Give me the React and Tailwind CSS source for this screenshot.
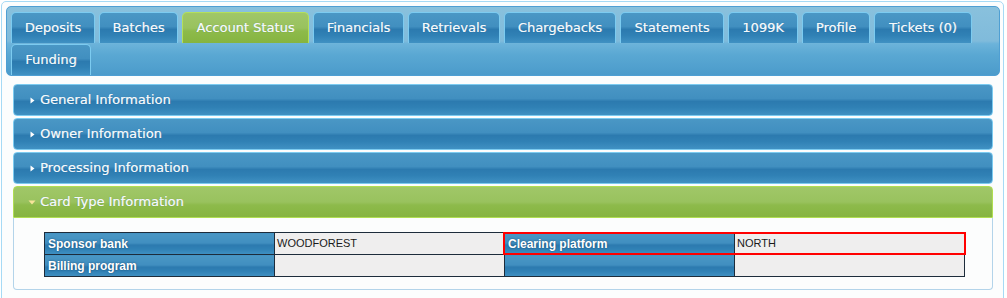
import React from "react";

const blueGloss =
  "bg-[linear-gradient(to_bottom,#4a97c5_0%,#418fc0_45%,#2c7aaf_55%,#3081b5_75%,#4091c3_100%)]";
const greenGloss =
  "bg-[linear-gradient(to_bottom,#a0c768_0%,#99c25e_50%,#8dba4b_60%,#86b440_100%)]";

const tabs = [
  { label: "Deposits", w: "w-[84px]" },
  { label: "Batches", w: "w-[79px]" },
  { label: "Account Status", w: "w-[127px]", active: true },
  { label: "Financials", w: "w-[91px]" },
  { label: "Retrievals", w: "w-[92px]" },
  { label: "Chargebacks", w: "w-[112px]" },
  { label: "Statements", w: "w-[104px]" },
  { label: "1099K", w: "w-[70px]" },
  { label: "Profile", w: "w-[68px]" },
  { label: "Tickets (0)", w: "w-[98px]" },
  { label: "Funding", w: "w-[80px]" },
];

const sections = ["General Information", "Owner Information", "Processing Information"];

const Tab = ({ label, w, active }) => (
  <div
    className={`${w} h-[31px] mr-[4px] flex items-center justify-center rounded-t-[5px] border border-b-0 text-[13px] text-[#f4f9fc] [text-shadow:0.4px_0_0_rgba(255,255,255,0.55),0_0_1px_rgba(0,40,80,0.3)] ${
      active ? `${greenGloss} border-[#b4e05a]` : `${blueGloss} border-[#7ccbf0]`
    }`}
  >
    {label}
  </div>
);

const RightArrow = () => (
  <svg width="5" height="7" viewBox="0 0 5 7">
    <path d="M0.5 0.5 L4.5 3.5 L0.5 6.5 Z" fill="#ffffff" />
  </svg>
);

const DownArrow = () => (
  <svg width="8" height="5" viewBox="0 0 8 5">
    <path d="M0.5 0.5 L7.5 0.5 L4 4.5 Z" fill="#f7e49a" />
  </svg>
);

const SectionHeader = ({ title, open }) => (
  <div
    className={`h-[32px] flex items-center pl-[14px] text-[13px] text-[#f4f9fc] [text-shadow:0.4px_0_0_rgba(255,255,255,0.55),0_0_1px_rgba(0,40,80,0.3)] ${
      open
        ? `${greenGloss} border border-[#b0de52] rounded-t-[4px]`
        : `${blueGloss} border border-[#7ccbf0] rounded-[4px]`
    }`}
  >
    <span className="w-[8px] flex justify-center">{open ? <DownArrow /> : <RightArrow />}</span>
    <span className="ml-[4px]">{title}</span>
  </div>
);

const Label = ({ children }) => (
  <td
    className={`w-[230px] h-[22px] border border-[#1d2c3b] ${blueGloss} px-[3px] text-[12px] font-bold text-white font-['Liberation_Sans',sans-serif] [text-shadow:0_0_2px_rgba(0,30,60,0.6)]`}
  >
    {children}
  </td>
);

const Value = ({ children }) => (
  <td className="w-[230px] h-[22px] border border-[#1d2c3b] bg-[#efeeee] px-[2px] text-[11px] text-[#1a1a1a] font-['Liberation_Sans',sans-serif]">
    {children}
  </td>
);

export default function App() {
  return (
    <div className="w-[1007px] h-[298px] overflow-hidden bg-white font-['DejaVu_Sans',sans-serif]">
      <div className="ml-[1px] mt-[1px] w-[1003px] h-[320px] rounded-[5px] border border-[#a6daf5] bg-[#fcfdfd] pl-[4px] pr-[3px] pt-[4px]">
        {/* tab strip */}
        <div className="h-[70px] rounded-[5px] border border-[#4f9fd3] bg-[linear-gradient(to_bottom,#89c1dd_0%,#80bbdb_50%,#6cb3da_54%,#5aa8d3_70%,#4b9bcb_100%)] pt-[5px] pl-[4px] flex flex-wrap content-start gap-y-[1px]">
          {tabs.map((t) => (
            <Tab key={t.label} {...t} />
          ))}
        </div>

        {/* accordion */}
        <div className="ml-[7px] mr-[7px] mt-[8px] flex flex-col gap-[2px]">
          {sections.map((s) => (
            <SectionHeader key={s} title={s} />
          ))}
          <div>
            <SectionHeader title="Card Type Information" open />
            <div className="h-[72px] border border-t-0 border-[#b3d4ea] rounded-b-[4px] bg-[#fcfdfd] pt-[14px] pl-[30px]">
              <div className="relative w-[921px]">
                <table className="w-[921px] table-fixed border-collapse">
                  <tbody>
                    <tr>
                      <Label>Sponsor bank</Label>
                      <Value>WOODFOREST</Value>
                      <Label>Clearing platform</Label>
                      <Value>NORTH</Value>
                    </tr>
                    <tr>
                      <Label>Billing program</Label>
                      <Value></Value>
                      <Label></Label>
                      <Value></Value>
                    </tr>
                  </tbody>
                </table>
                <div className="absolute left-[459px] top-0 w-[463px] h-[23px] border-2 border-[#ff0000]" />
              </div>
            </div>
          </div>
        </div>
      </div>
    </div>
  );
}
